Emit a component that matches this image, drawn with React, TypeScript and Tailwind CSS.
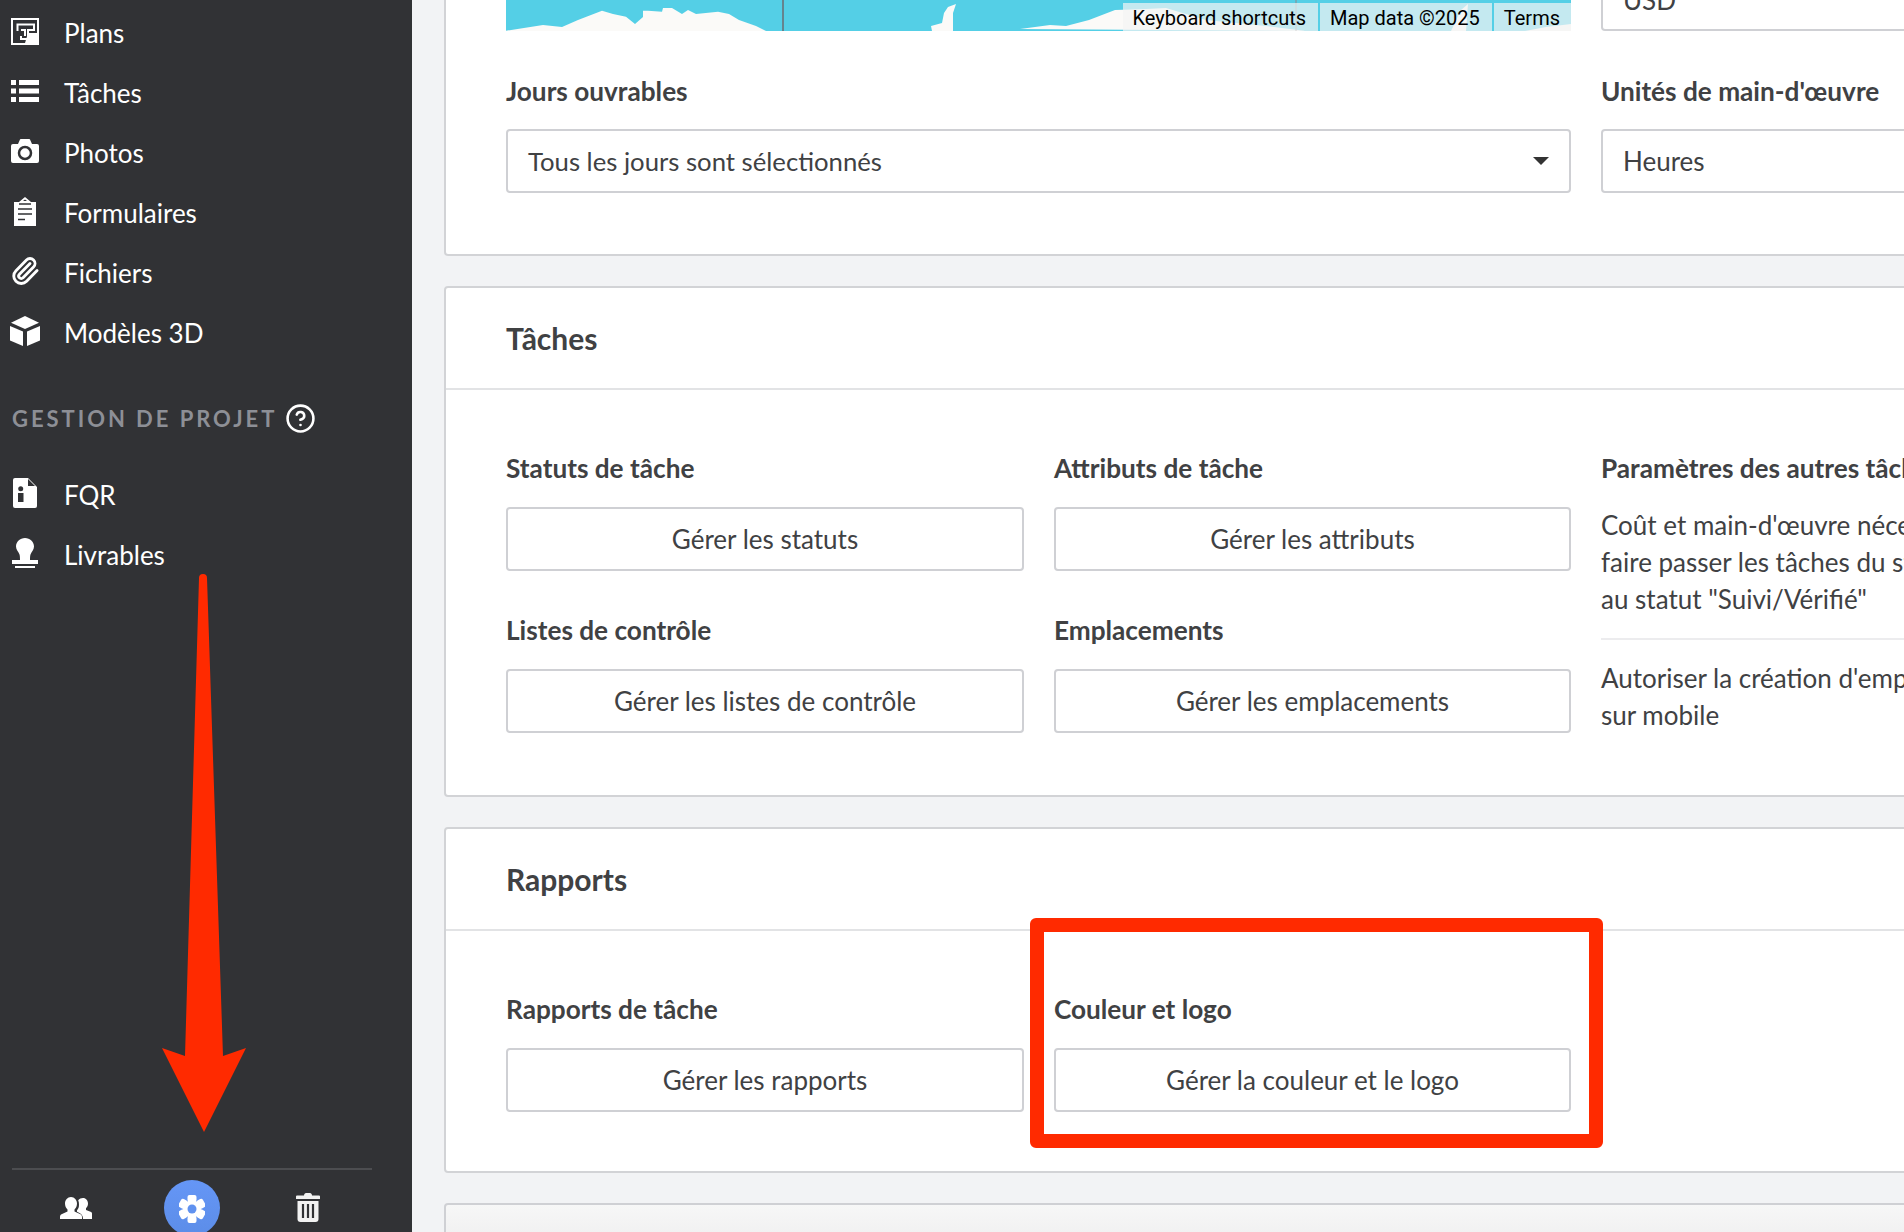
import React from 'react';
import { HelpCircle, Paperclip } from 'lucide-react';

const DARK = '#313235';

const PlanIcon = () => (
  <svg width="28" height="27" viewBox="0 0 28 27">
    <rect width="28" height="27" fill="white" />
    <rect x="2" y="2" width="24" height="23" fill={DARK} />
    <path d="M17 15h9v10H14z" fill="white" />
    <path d="M6.500 13V6.500H23V12h-6v9h-7v-3" fill="none" stroke="white" strokeWidth="2" />
    <path d="M10 11h5v7h-2v-5h-3z" fill="white" />
  </svg>
);

const ListIcon = () => (
  <svg width="28" height="22" viewBox="0 0 28 22" fill="white">
    <rect x="0" y="0" width="5" height="5" />
    <rect x="8" y="0" width="20" height="5" />
    <rect x="0" y="8.500" width="5" height="5" />
    <rect x="8" y="8.500" width="20" height="5" />
    <rect x="0" y="17" width="5" height="5" />
    <rect x="8" y="17" width="20" height="5" />
  </svg>
);

const CameraIcon = () => (
  <svg width="28" height="24" viewBox="0 0 28 24">
    <path d="M2 5h5l2-4.500A1 1 0 0 1 10 0h8a1 1 0 0 1 1 .5L21 5h5a2 2 0 0 1 2 2v15a2 2 0 0 1-2 2H2a2 2 0 0 1-2-2V7a2 2 0 0 1 2-2z" fill="white" />
    <circle cx="14" cy="14" r="6" fill="white" stroke={DARK} strokeWidth="2.500" />
  </svg>
);

const ClipboardIcon = () => (
  <svg width="22" height="29" viewBox="0 0 22 29">
    <path d="M0 5h5l6-5 6 5h5v24H0z" fill="white" />
    <path d="M5 7h12" stroke={DARK} strokeWidth="1.500" />
    <path d="M9 4l2-1.500L13 4z" fill={DARK} />
    <path d="M4 12h14M4 17h14M4 22.500h7" stroke={DARK} strokeWidth="1.500" />
  </svg>
);

const CubeIcon = () => (
  <svg width="30" height="30" viewBox="0 0 30 30" fill="white">
    <path d="M15 0l14 6.700L15 13 1 6.700z" />
    <path d="M0 10l13 5.500V30L0 24.500z" />
    <path d="M30 10l-13 5.500V30l13-5.500z" />
  </svg>
);

const FileInfoIcon = () => (
  <svg width="24" height="30" viewBox="0 0 24 30">
    <path d="M2 0h13l9 9v19a2 2 0 0 1-2 2H2a2 2 0 0 1-2-2V2a2 2 0 0 1 2-2z" fill="white" />
    <path d="M15 1v7h7z" fill={DARK} />
    <circle cx="7.700" cy="10.700" r="2.500" fill={DARK} />
    <rect x="5" y="15" width="5.500" height="9" fill={DARK} />
  </svg>
);

const StampIcon = () => (
  <svg width="26" height="30" viewBox="0 0 26 30" fill="white">
    <path d="M13 0c5 0 9 4 9 8.500 0 3-2.500 5.500-3.500 8-.4 1.200-.5 3-.5 5.500H8c0-2.500-.1-4.300-.5-5.500-1-2.500-3.500-5-3.500-8C4 4 8 0 13 0z" />
    <rect x="0" y="22" width="26" height="4" />
    <rect x="3" y="28" width="20" height="2" />
  </svg>
);

const UsersIcon = () => (
  <svg width="32" height="22" viewBox="0 0 32 22" fill="white">
    <path d="M23 1c3 0 5 2.500 5 5.500 0 2-.8 3.700-2 4.800v1.700l4.500 1.700c1 .4 1.500 1 1.500 2V22h-9c0-3.500-1.500-5-4-6.200l-2-1v-1.500c1.500-1.500 2-3.500 2-5.800 0-1.500-.2-3-.8-4.300C19.500 1.800 21 1 23 1z" />
    <path d="M11 0c3.500 0 6 3 6 6.500 0 2.500-1 4.500-2.500 6v2l6 2.700c1.200.6 1.500 1.500 1.500 2.800v2H0v-2c0-1.300.3-2.200 1.500-2.800l6-2.700v-2C6 11 5 9 5 6.500 5 3 7.500 0 11 0z" />
  </svg>
);

const GearIcon = () => (
  <svg width="26" height="28" viewBox="0 0 26 28" fill="white">
    {[0, 60, 120, 180, 240, 300].map((a) => (
      <rect key={a} x="8.500" y="0" width="9" height="7" rx="2" transform={`rotate(${a} 13 14)`} />
    ))}
    <circle cx="13" cy="14" r="9" />
    <circle cx="13" cy="14" r="4.500" fill="#6092f0" />
  </svg>
);

const TrashIcon = () => (
  <svg width="24" height="29" viewBox="0 0 24 29" fill="#f2f2f2">
    <path d="M8 2.500C8 1 9 0 10 0h4c1 0 2 1 2 2.500h7a1 1 0 0 1 1 1V6H0V3.500a1 1 0 0 1 1-1z" />
    <path d="M1.500 8h21v18a3 3 0 0 1-3 3h-15a3 3 0 0 1-3-3z" />
    <path d="M7 11v14M12 11v14M17 11v14" stroke={DARK} strokeWidth="2.200" />
  </svg>
);

const navTop = [
  { icon: <PlanIcon />, label: 'Plans' },
  { icon: <ListIcon />, label: 'Tâches' },
  { icon: <CameraIcon />, label: 'Photos' },
  { icon: <ClipboardIcon />, label: 'Formulaires' },
  { icon: <Paperclip size={30} strokeWidth={2.300} />, label: 'Fichiers' },
  { icon: <CubeIcon />, label: 'Modèles 3D' },
];

const navBottom = [
  { icon: <FileInfoIcon />, label: 'FQR' },
  { icon: <StampIcon />, label: 'Livrables' },
];

const NavRow = ({ icon, label }: { icon: React.ReactNode; label: string }) => (
  <div className="flex h-[60px] items-center text-[26px] text-white">
    <div className="mb-[4px] flex w-[50px] justify-center">{icon}</div>
    <span className="ml-[14px]">{label}</span>
  </div>
);

const Sidebar = () => (
  <aside className="flex h-full w-[412px] shrink-0 flex-col bg-[#313235]">
    <div className="flex flex-col pt-[3px]">
      {navTop.map((n) => (
        <NavRow key={n.label} icon={n.icon} label={n.label} />
      ))}
    </div>
    <div className="mt-[41px] flex h-[28px] items-center gap-[8px] pl-[12px]">
      <span className="text-[22px] font-bold tracking-[0.134em] text-[#8d8f96]">GESTION DE PROJET</span>
      <HelpCircle size={31} strokeWidth={2} className="text-white" />
    </div>
    <div className="mt-[33px] flex flex-col">
      {navBottom.map((n) => (
        <NavRow key={n.label} icon={n.icon} label={n.label} />
      ))}
    </div>
    <div className="mt-auto ml-[12px] w-[360px] border-t-2 border-[#4c4d50]" />
    <div className="ml-[60px] flex h-[62px] items-start pt-[10px]">
      <div className="pt-[17px]"><UsersIcon /></div>
      <div className="ml-[72px] flex h-[56px] w-[56px] items-center justify-center rounded-full bg-gradient-to-b from-[#6596f6] to-[#5c8de8] pt-[1px]"><GearIcon /></div>
      <div className="ml-[76px] pt-[13px]"><TrashIcon /></div>
    </div>
  </aside>
);

const Label = ({ children }: { children: React.ReactNode }) => (
  <div className="mb-[23px] text-[26.200px] leading-[32px] font-bold whitespace-nowrap text-[#404143]">{children}</div>
);

const Btn = ({ children }: { children: React.ReactNode }) => (
  <div className="flex h-[64px] items-center justify-center rounded-[4px] border-2 border-[#cfd0d4] bg-white text-[26px] text-[#404143]">
    {children}
  </div>
);

const Field = ({ label, text }: { label: string; text: string }) => (
  <div>
    <Label>{label}</Label>
    <Btn>{text}</Btn>
  </div>
);

const Card = ({ title, children, className }: { title: string; children: React.ReactNode; className: string }) => (
  <section className={`w-[1500px] rounded-[4px] border-2 border-[#d2d3d6] bg-white ${className}`}>
    <div className="flex h-[102px] items-center border-b-2 border-[#e2e3e5] pl-[60px]">
      <h2 className="text-[30px] font-bold text-[#404143]">{title}</h2>
    </div>
    {children}
  </section>
);

const MapStrip = () => (
  <div className="relative h-[31px] bg-[#54cfe6]">
    <svg width="1065" height="31" viewBox="0 0 1065 31" className="absolute inset-0">
      <path
        d="M0 31L0 30.700 37 25 56 27 72 20 96 10.700 107 14 120 16.700 129 24 137 17 137 10.700 142 10.700 156 11.700 157 8 166 8 176 14 182 10 190 14 212 11.700 223 14 233 20 250 26 260 31z"
        fill="#fbfaf8"
      />
      <path d="M425 26L436 23 438 13 442 7 450 4 447 13 447 31 426 31z" fill="#fbfaf8" />
      <path d="M514 29L544 25 560 26 583 20 609 10 640 9 660 8 700 20 760 26 800 31z" fill="#fbfaf8" />
      <path d="M945 31L955 10 962 4 960 31z" fill="#fbfaf8" />
      <path d="M1019 31L1040 27 1065 24 1065 31z" fill="#fbfaf8" />
      <path d="M277 0V31" stroke="#6b6b70" strokeWidth="1.500" />
      <path d="M790 0V31" stroke="#8a8a8f" strokeWidth="1" />
    </svg>
    <div className="absolute right-0 bottom-0 flex h-[28px] items-stretch bg-[#f3f3f3]/70 font-['Roboto',sans-serif] text-[20px] text-black">
      <span className="flex items-center border-r-2 border-[#54cfe6] pt-[2px] pr-[12px] pl-[10px]">Keyboard shortcuts</span>
      <span className="flex items-center border-r-2 border-[#54cfe6] pt-[2px] pr-[12px] pl-[10px]">Map data ©2025</span>
      <span className="flex items-center pt-[2px] pr-[11px] pl-[10px]">Terms</span>
    </div>
  </div>
);

const Annotations = () => (
  <>
    <svg width="86" height="562" viewBox="0 0 86 562" className="absolute top-[573px] left-[162px]">
      <path d="M37 5a4 4 0 0 1 8 0l16 478 23-8-42 84L0 475l23 8z" fill="#ff2a00" />
    </svg>
    <div className="absolute top-[918px] left-[1030px] h-[230px] w-[573px] rounded-[6px] border-[14px] border-[#ff2a00]" />
  </>
);

export default function App() {
  return (
    <div className="relative flex h-screen w-full overflow-hidden bg-[#f2f3f5] font-['Lato',sans-serif]">
      <Sidebar />
      <main className="flex min-w-0 flex-1 flex-col gap-[30px] pl-[32px]">
        <section className="h-[256px] w-[1500px] shrink-0 rounded-b-[4px] border-x-2 border-b-2 border-[#d2d3d6] bg-white pl-[60px]">
          <div className="grid grid-cols-[1065px_600px] gap-x-[30px]">
            <MapStrip />
            <div className="h-[31px] rounded-b-[4px] border-x-2 border-b-2 border-[#cfd0d4] pl-[20px] text-[26px] leading-[0px] text-[#404143]">USD</div>
            <div className="mt-[44px]">
              <div className="mb-[22px] text-[26.200px] leading-[32px] font-bold whitespace-nowrap text-[#404143]">Jours ouvrables</div>
              <div className="flex h-[64px] items-center justify-between rounded-[4px] border-2 border-[#cfd0d4] pr-[20px] pl-[20px] text-[25.700px] text-[#404143]">
                <span>Tous les jours sont sélectionnés</span>
                <span className="h-0 w-0 border-x-[8px] border-t-[8px] border-x-transparent border-t-[#333]" />
              </div>
            </div>
            <div className="mt-[44px]">
              <div className="mb-[22px] text-[26.200px] leading-[32px] font-bold whitespace-nowrap text-[#404143]">Unités de main-d'œuvre</div>
              <div className="flex h-[64px] items-center rounded-[4px] border-2 border-[#cfd0d4] pl-[20px] text-[26px] text-[#404143]">Heures</div>
            </div>
          </div>
        </section>

        <Card title="Tâches" className="h-[511px] shrink-0">
          <div className="grid grid-cols-[518px_517px_600px] gap-x-[30px] pt-[62px] pl-[60px]">
            <div className="flex flex-col gap-[43px]">
              <Field label="Statuts de tâche" text="Gérer les statuts" />
              <Field label="Listes de contrôle" text="Gérer les listes de contrôle" />
            </div>
            <div className="flex flex-col gap-[43px]">
              <Field label="Attributs de tâche" text="Gérer les attributs" />
              <Field label="Emplacements" text="Gérer les emplacements" />
            </div>
            <div>
              <div className="text-[26.200px] leading-[32px] font-bold whitespace-nowrap text-[#404143]">Paramètres des autres tâches</div>
              <p className="mt-[23px] text-[26px] leading-[37px] whitespace-nowrap text-[#404143]">
                Coût et main-d'œuvre nécessaires pour<br />faire passer les tâches du statut<br />au statut "Suivi/Vérifié"
              </p>
              <div className="mt-[20px] border-t-2 border-[#ececee] pt-[20px]">
                <p className="text-[26px] leading-[37px] whitespace-nowrap text-[#404143]">
                  Autoriser la création d'emplacements<br />sur mobile
                </p>
              </div>
            </div>
          </div>
        </Card>

        <Card title="Rapports" className="h-[346px] shrink-0">
          <div className="grid grid-cols-[518px_517px] gap-x-[30px] pt-[62px] pl-[60px]">
            <Field label="Rapports de tâche" text="Gérer les rapports" />
            <Field label="Couleur et logo" text="Gérer la couleur et le logo" />
          </div>
        </Card>

        <section className="h-[60px] w-[1500px] shrink-0 rounded-t-[4px] border-x-2 border-t-2 border-[#cfd0d4] bg-gradient-to-b from-[#f7f7f7] to-[#ebebec]" />
      </main>
      <Annotations />
    </div>
  );
}
